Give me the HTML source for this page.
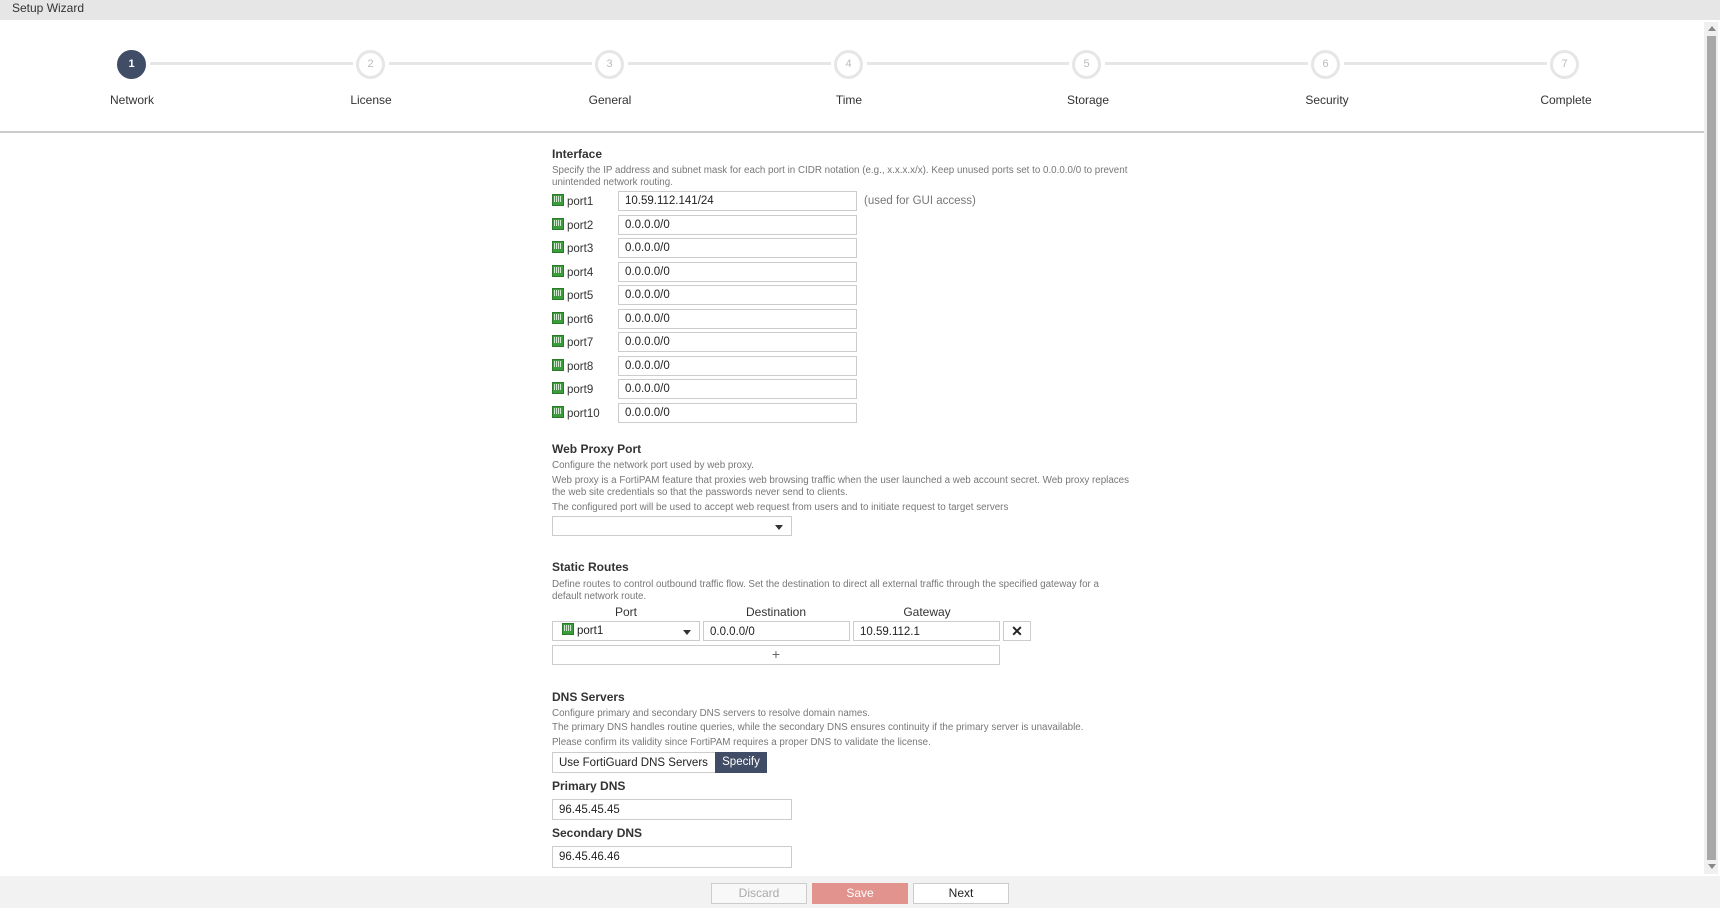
<!DOCTYPE html>
<html><head><meta charset="utf-8"><style>
*{box-sizing:border-box;margin:0;padding:0}
body{width:1720px;height:908px;background:#fff;font-family:"Liberation Sans",sans-serif;color:#222;position:relative;overflow:hidden}
.a{position:absolute;white-space:nowrap}
.hdr{left:0;top:0;width:1720px;height:20px;background:#e6e6e6;font-size:12px;line-height:17px;padding-left:12px;color:#333}
.c{width:29px;height:29px;border-radius:50%;border:3px solid #e6e6e6;background:#fff;color:#bbb;font-size:11px;text-align:center;line-height:23px}
.c.on{background:#414d66;border-color:#414d66;color:#fff;font-weight:bold}
.ln{height:3px;background:#e6e6e6;top:62px}
.lb{font-size:12px;color:#333;transform:translateX(-50%);top:93px}
.t{font-size:12px;font-weight:bold;color:#333}
.d{font-size:9.8px;color:#777}
.in{border:1px solid #ccc;background:#fff;height:20px;font-size:11.5px;line-height:19px;padding-left:6px;color:#222}
.pl{font-size:11.5px;color:#333}
.ic{display:inline-block;width:12px;height:12px;background:#3a9c3a;border:1px solid #2a7a2a;vertical-align:-1px;margin-right:3px;position:relative}
.ic:after{content:"";position:absolute;left:1px;top:1px;width:8px;height:6px;background:repeating-linear-gradient(90deg,#cfe9cf 0 1px,#3a9c3a 1px 2px)}
.btn{height:21px;border:1px solid #ccc;font-size:12px;text-align:center;line-height:19px}
.caret{position:absolute;right:8px;top:8px;width:0;height:0;border-left:4px solid transparent;border-right:4px solid transparent;border-top:5px solid #333}
</style></head><body>
<div class="a hdr">Setup Wizard</div>
<div class="a ln" style="left:150px;width:203px"></div>
<div class="a ln" style="left:389px;width:203px"></div>
<div class="a ln" style="left:628px;width:203px"></div>
<div class="a ln" style="left:867px;width:202px"></div>
<div class="a ln" style="left:1105px;width:203px"></div>
<div class="a ln" style="left:1344px;width:203px"></div>
<div class="a c on" style="left:117px;top:50px">1</div>
<div class="a c" style="left:356px;top:50px">2</div>
<div class="a c" style="left:595px;top:50px">3</div>
<div class="a c" style="left:834px;top:50px">4</div>
<div class="a c" style="left:1072px;top:50px">5</div>
<div class="a c" style="left:1311px;top:50px">6</div>
<div class="a c" style="left:1550px;top:50px">7</div>
<div class="a lb" style="left:132px">Network</div>
<div class="a lb" style="left:371px">License</div>
<div class="a lb" style="left:610px">General</div>
<div class="a lb" style="left:849px">Time</div>
<div class="a lb" style="left:1088px">Storage</div>
<div class="a lb" style="left:1327px">Security</div>
<div class="a lb" style="left:1566px">Complete</div>
<div class="a" style="left:0;top:131px;width:1704px;height:2px;background:#ccc"></div>
<div class="a" style="left:1704px;top:22px;width:14px;height:852px;background:#f0f0f0"></div>
<div class="a" style="left:1707px;top:36px;width:9px;height:824px;background:#a8a8a8"></div>
<div class="a" style="left:1708px;top:26px;border-left:4px solid transparent;border-right:4px solid transparent;border-bottom:5px solid #888"></div>
<div class="a" style="left:1708px;top:864px;border-left:4px solid transparent;border-right:4px solid transparent;border-top:5px solid #888"></div>

<div class="a t" style="left:552px;top:147px">Interface</div>
<div class="a d" style="left:552px;top:165px">Specify the IP address and subnet mask for each port in CIDR notation (e.g., x.x.x.x/x). Keep unused ports set to 0.0.0.0/0 to prevent</div>
<div class="a d" style="left:552px;top:177px">unintended network routing.</div>

<div class="a pl" style="left:552px;top:194px"><span class="ic"></span>port1</div><div class="a in" style="left:618px;top:191px;width:239px">10.59.112.141/24</div>
<div class="a" style="left:864px;top:195px;font-size:11.5px;color:#777">(used for GUI access)</div>
<div class="a pl" style="left:552px;top:218px"><span class="ic"></span>port2</div><div class="a in" style="left:618px;top:215px;width:239px">0.0.0.0/0</div>
<div class="a pl" style="left:552px;top:241px"><span class="ic"></span>port3</div><div class="a in" style="left:618px;top:238px;width:239px">0.0.0.0/0</div>
<div class="a pl" style="left:552px;top:265px"><span class="ic"></span>port4</div><div class="a in" style="left:618px;top:262px;width:239px">0.0.0.0/0</div>
<div class="a pl" style="left:552px;top:288px"><span class="ic"></span>port5</div><div class="a in" style="left:618px;top:285px;width:239px">0.0.0.0/0</div>
<div class="a pl" style="left:552px;top:312px"><span class="ic"></span>port6</div><div class="a in" style="left:618px;top:309px;width:239px">0.0.0.0/0</div>
<div class="a pl" style="left:552px;top:335px"><span class="ic"></span>port7</div><div class="a in" style="left:618px;top:332px;width:239px">0.0.0.0/0</div>
<div class="a pl" style="left:552px;top:359px"><span class="ic"></span>port8</div><div class="a in" style="left:618px;top:356px;width:239px">0.0.0.0/0</div>
<div class="a pl" style="left:552px;top:382px"><span class="ic"></span>port9</div><div class="a in" style="left:618px;top:379px;width:239px">0.0.0.0/0</div>
<div class="a pl" style="left:552px;top:406px"><span class="ic"></span>port10</div><div class="a in" style="left:618px;top:403px;width:239px">0.0.0.0/0</div>

<div class="a t" style="left:552px;top:442px">Web Proxy Port</div>
<div class="a d" style="left:552px;top:460px">Configure the network port used by web proxy.</div>
<div class="a d" style="left:552px;top:475px">Web proxy is a FortiPAM feature that proxies web browsing traffic when the user launched a web account secret. Web proxy replaces</div>
<div class="a d" style="left:552px;top:487px">the web site credentials so that the passwords never send to clients.</div>
<div class="a d" style="left:552px;top:502px">The configured port will be used to accept web request from users and to initiate request to target servers</div>
<div class="a in" style="left:552px;top:516px;width:240px"><span class="caret"></span></div>

<div class="a t" style="left:552px;top:560px">Static Routes</div>
<div class="a d" style="left:552px;top:579px">Define routes to control outbound traffic flow. Set the destination to direct all external traffic through the specified gateway for a</div>
<div class="a d" style="left:552px;top:591px">default network route.</div>
<div class="a" style="left:626px;top:605px;font-size:12px;color:#333;transform:translateX(-50%)">Port</div>
<div class="a" style="left:776px;top:605px;font-size:12px;color:#333;transform:translateX(-50%)">Destination</div>
<div class="a" style="left:927px;top:605px;font-size:12px;color:#333;transform:translateX(-50%)">Gateway</div>
<div class="a in" style="left:552px;top:621px;width:148px;font-size:11.5px;padding-left:9px"><span class="ic"></span>port1<span class="caret"></span></div>
<div class="a in" style="left:703px;top:621px;width:147px;line-height:20px">0.0.0.0/0</div>
<div class="a in" style="left:853px;top:621px;width:147px;line-height:20px">10.59.112.1</div>
<div class="a in" style="left:1003px;top:621px;width:28px;padding:0;text-align:center;font-weight:bold;font-size:14px">✕</div>
<div class="a in" style="left:552px;top:645px;width:448px;padding:0;text-align:center;color:#666;font-size:14px;line-height:17px">+</div>

<div class="a t" style="left:552px;top:690px">DNS Servers</div>
<div class="a d" style="left:552px;top:708px">Configure primary and secondary DNS servers to resolve domain names.</div>
<div class="a d" style="left:552px;top:722px">The primary DNS handles routine queries, while the secondary DNS ensures continuity if the primary server is unavailable.</div>
<div class="a d" style="left:552px;top:737px">Please confirm its validity since FortiPAM requires a proper DNS to validate the license.</div>
<div class="a in" style="left:552px;top:752px;width:164px;height:21px;font-size:11.5px;line-height:20px">Use FortiGuard DNS Servers</div>
<div class="a" style="left:715px;top:752px;width:52px;height:21px;background:#414d66;color:#fff;font-size:11.5px;line-height:21px;text-align:center">Specify</div>
<div class="a t" style="left:552px;top:779px">Primary DNS</div>
<div class="a in" style="left:552px;top:799px;width:240px;height:21px;line-height:20px">96.45.45.45</div>
<div class="a t" style="left:552px;top:826px">Secondary DNS</div>
<div class="a in" style="left:552px;top:846px;width:240px;height:22px;line-height:21px">96.45.46.46</div>

<div class="a" style="left:0;top:876px;width:1720px;height:32px;background:#f2f2f2"></div>
<div class="a btn" style="left:711px;top:883px;width:96px;background:#f8f8f8;color:#aaa">Discard</div>
<div class="a btn" style="left:812px;top:883px;width:96px;background:#e3938d;border-color:#e3938d;color:#fff">Save</div>
<div class="a btn" style="left:913px;top:883px;width:96px;background:#fff;color:#222">Next</div>
</body></html>
